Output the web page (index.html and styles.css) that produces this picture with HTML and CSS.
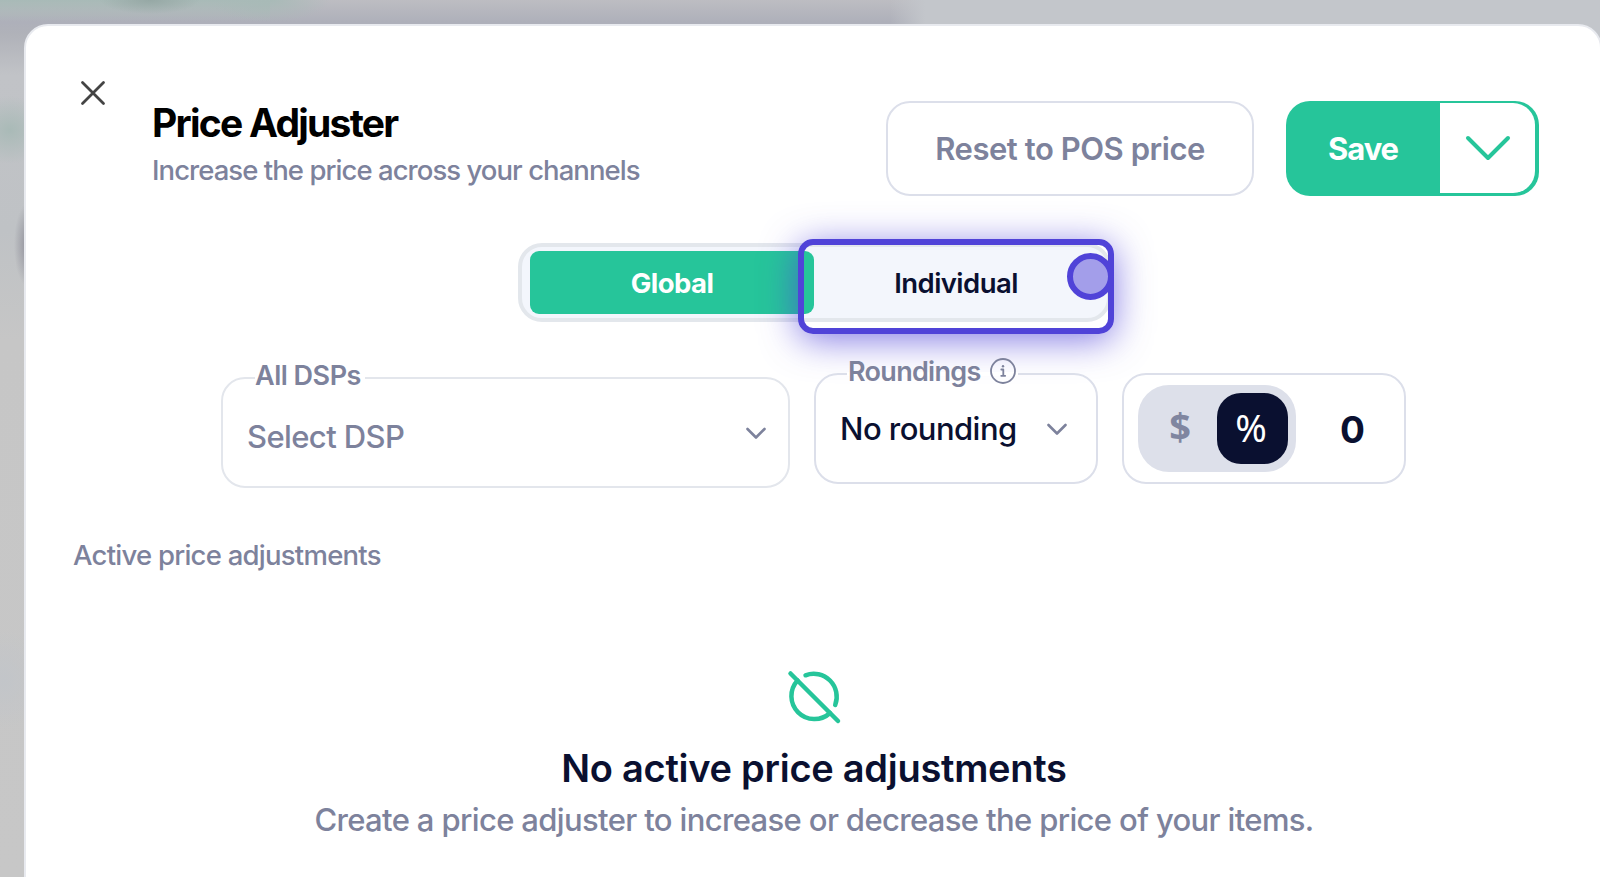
FILE: index.html
```
<!DOCTYPE html>
<html lang="en">
<head>
    <meta charset="UTF-8">
    <meta name="viewport" content="width=device-width, initial-scale=1.0">
    <title>Price Adjuster</title>
    <link rel="stylesheet" href="styles.css">
</head>
<body>

    <div class="modal">
        <header class="header">
            <button class="close" aria-label="Close">
                <svg width="26" height="26" viewBox="0 0 26 26"><path d="M2.5 2.5l21 21M23.5 2.5l-21 21"/></svg>
            </button>
            <div class="titles">
                <h1>Price Adjuster</h1>
                <p>Increase the price across your channels</p>
            </div>
            <button class="reset"><span>Reset to POS price</span></button>
            <div class="save">
                <button class="save-main">Save</button>
                <button class="save-more" aria-label="More save options">
                    <svg width="48" height="28" viewBox="0 0 48 28"><path d="M4 4L24 24L44 4"/></svg>
                </button>
            </div>
        </header>

        <div class="tabs">
            <button class="tab active">Global</button>
            <button class="tab individual">Individual</button>
            <!-- highlight over the second tab -->
            <div class="highlight"><span class="pointer"></span></div>
        </div>

        <div class="filters">
            <div class="field dsp">
                <div class="legend">All DSPs</div>
                <span class="value">Select DSP</span>
                <svg class="arrow" width="22" height="14" viewBox="0 0 22 14"><path d="M3.500 3L12 11.500L20.500 3"/></svg>
            </div>
            <div class="field roundings">
                <div class="legend">
                    <span>Roundings</span>
                    <svg class="info" width="26" height="26" viewBox="0 0 26 26">
                        <circle cx="13" cy="13" r="12"/>
                        <path d="M11.300 11.500h2v6.300M11.200 17.800h4"/>
                        <circle class="dot" cx="13" cy="8.300" r="1.200"/>
                    </svg>
                </div>
                <span class="value">No rounding</span>
                <svg class="arrow" width="22" height="14" viewBox="0 0 22 14"><path d="M3.500 3L12 11.500L20.500 3"/></svg>
            </div>
            <div class="field amount">
                <div class="units">
                    <span class="unit">$</span>
                    <span class="unit selected">%</span>
                </div>
                <span class="number">0</span>
            </div>
        </div>

        <h2 class="section">Active price adjustments</h2>

        <div class="empty">
            <svg width="56" height="56" viewBox="0 0 56 56">
                <path d="M4.500 4.500L52 52"/>
                <path d="M11.500 11.500A23 23 0 0 0 44 44"/>
                <path d="M19.500 6.300A23 23 0 0 1 49.200 36"/>
            </svg>
            <h3>No active price adjustments</h3>
            <p>Create a price adjuster to increase or decrease the price of your items.</p>
        </div>
    </div>

</body>
</html>
```
FILE: styles.css
```
* {
    box-sizing: border-box;
}
body {
    margin: 0;
    height: 877px;
    padding: 24px 0 0 24px;
    overflow: hidden;
    font-family: Inter, "Liberation Sans", sans-serif;
    color: #0a1030;
    background:
        radial-gradient(ellipse 50px 14px at 150px 0, #96a8a5, transparent),
        radial-gradient(ellipse 14px 42px at 28px 245px, #8f8f99, transparent),
        radial-gradient(ellipse 40px 34px at 10px 130px, #a9bab7, transparent),
        radial-gradient(ellipse 40px 50px at 4px 680px, #c2c5c9, transparent),
        radial-gradient(ellipse 60px 22px at 270px 0, #a8bab7, transparent),
        linear-gradient(#a8bab7 0, #a8bab700 22px) 0 0 / 270px 24px no-repeat,
        linear-gradient(90deg, transparent 890px, #c3c6cb 925px) 0 0 / 100% 40px no-repeat,
        linear-gradient(#bdbdc2 0, #aeb0ba 22px, #b0b2b9 34px, #c1c3c7 75px, #bfc2c5 230px, #c6c6c6 340px, #c7c7c7);
}
h1, h2, h3, p {
    margin: 0;
}
button {
    padding: 0;
    border: 0;
    background: none;
    font: inherit;
    color: inherit;
    cursor: pointer;
}
svg {
    display: block;
    fill: none;
    stroke-linecap: round;
    stroke-linejoin: round;
}
.modal {
    width: 1578px;
    height: 880px;
    background-color: white;
    border: 2px solid #e8eaef;
    border-radius: 24px;
}

/* header */
.header {
    display: flex;
    height: 217px;
    padding: 75px 61px 0 54px;
}
.close {
    width: 26px;
    height: 26px;
    margin-top: -21px;
}
.close svg {
    stroke: #444;
    stroke-width: 2.8;
}
.titles {
    margin-left: 46px;
}
.titles h1 {
    font-size: 39px;
    line-height: 44px;
    font-weight: 700;
    letter-spacing: -1.75px;
    color: black;
}
.titles p {
    margin-top: 3px;
    font-size: 27.5px;
    font-weight: 500;
    line-height: 44px;
    letter-spacing: -0.95px;
    color: #7d829c;
}
.reset {
    width: 368px;
    height: 95px;
    margin-left: auto;
    border: 2px solid #dcdfea;
    border-radius: 24px;
    font-size: 31px;
    font-weight: 600;
    letter-spacing: -0.45px;
    color: #7d829c;
}
.save {
    display: flex;
    width: 253px;
    height: 95px;
    margin-left: 32px;
    padding: 2px 4px 3px 0;
    border-radius: 24px;
    background-color: #26c59a;
}
.save-main {
    width: 154px;
    font-size: 31px;
    font-weight: 700;
    letter-spacing: -1.1px;
    color: white;
}
.save-more {
    display: flex;
    flex: 1;
    align-items: center;
    justify-content: center;
    background-color: white;
    border-radius: 0 22px 22px 0;
}
.save-more svg {
    stroke: #26c59a;
    stroke-width: 4;
}

/* tabs */
.tabs {
    position: relative;
    display: flex;
    width: 593px;
    height: 79px;
    margin-left: 492px;
    padding: 4px 8px;
    border: 4px solid #e3e7ec;
    border-radius: 24px;
    background-color: #f3f6fc;
}
.tab {
    flex: none;
    width: 284px;
    height: 63px;
    border-radius: 9px;
    font-size: 27.5px;
    font-weight: 600;
    letter-spacing: -0.55px;
}
.tab.active {
    background-color: #26c59a;
    color: white;
    font-weight: 700;
}
.highlight {
    position: absolute;
    left: 276px;
    top: -8px;
    width: 316px;
    height: 95px;
    border: 6px solid #5043d8;
    border-radius: 15px;
    box-shadow: 0 6px 36px rgba(80, 67, 216, 0.7);
}
.pointer {
    position: absolute;
    right: -6px;
    top: 8px;
    width: 47px;
    height: 47px;
    border: 6px solid #5043d8;
    border-radius: 50%;
    background-color: #a39eea;
}

/* filters */
.filters {
    display: flex;
    gap: 24px;
    margin-top: 51px;
    padding-left: 195px;
}
.field {
    position: relative;
    display: flex;
    align-items: center;
    justify-content: space-between;
    height: 111px;
    border: 2px solid #dcdfea;
    border-radius: 24px;
}
/* the white band only covers the border behind the label */
.legend {
    position: absolute;
    top: -22px;
    display: flex;
    align-items: center;
    height: 36px;
    background: linear-gradient(white, white) 0 19px / 100% 4px no-repeat;
    font-size: 27px;
    font-weight: 600;
    color: #7d829c;
    white-space: nowrap;
}
.value {
    font-size: 31px;
    font-weight: 500;
    white-space: nowrap;
}
.arrow {
    stroke: #7d829c;
    stroke-width: 2.6;
}
.dsp {
    width: 569px;
    margin-top: 4px;
    padding: 0 22px 0 24px;
    border-color: #e3e6ec;
}
.dsp .legend {
    left: 32px;
    width: 110px;
    letter-spacing: -0.5px;
}
.dsp .value {
    margin-top: 7px;
    letter-spacing: -0.6px;
    color: #7d829c;
}
.roundings {
    width: 284px;
    padding: 0 29px 0 24px;
}
.roundings .legend {
    left: 31px;
    width: 171px;
    padding-left: 1px;
    gap: 9px;
    letter-spacing: -0.7px;
}
.roundings .value {
    letter-spacing: -0.55px;
}
.info {
    stroke: #7d829c;
    stroke-width: 1.8;
}
.info .dot {
    fill: #7d829c;
    stroke: none;
}
.amount {
    width: 284px;
    padding: 0 39px 0 14px;
}
.units {
    display: flex;
    align-items: center;
    width: 158px;
    height: 87px;
    padding: 0 8px;
    border-radius: 31px;
    background-color: #dde0ea;
}
.unit {
    width: 71px;
    height: 71px;
    padding-right: 3px;
    border-radius: 24px;
    font-family: "Open Sans", "Noto Sans", sans-serif;
    font-size: 38px;
    font-weight: 700;
    line-height: 66px;
    text-align: center;
    color: #8086a0;
}
.unit.selected {
    background-color: #0a1030;
    font-family: "Noto Sans", sans-serif;
    font-weight: 400;
    line-height: 68px;
    color: white;
}
.number {
    padding-top: 2px;
    font-size: 37px;
    font-weight: 700;
}

/* list */
.section {
    margin: 45px 0 0 47px;
    font-size: 27.5px;
    line-height: 44px;
    font-weight: 500;
    letter-spacing: -0.75px;
    color: #7d829c;
}
.empty {
    display: flex;
    flex-direction: column;
    align-items: center;
    width: 1576px;
    margin-top: 92px;
}
.empty svg {
    stroke: #26c59a;
    stroke-width: 4.500;
}
.empty h3 {
    margin-top: 19px;
    font-size: 38px;
    line-height: 48px;
    font-weight: 600;
    letter-spacing: -0.27px;
}
.empty p {
    margin-top: 6px;
    font-size: 31px;
    line-height: 44px;
    font-weight: 500;
    letter-spacing: -0.64px;
    color: #7d829c;
}
```
